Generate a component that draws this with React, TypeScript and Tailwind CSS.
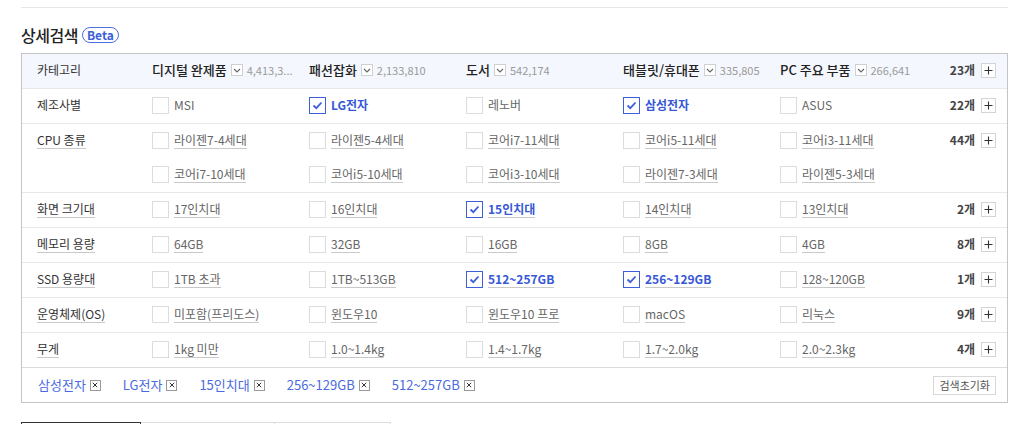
import { Fragment } from "react";

type Opt = { label: string; checked?: boolean; link?: boolean };
type Row = { title: string; count: string; link?: boolean; lines: Opt[][] };

const HEADER = [
  { name: "디지털 완제품", count: "4,413,3..." },
  { name: "패션잡화", count: "2,133,810" },
  { name: "도서", count: "542,174" },
  { name: "태블릿/휴대폰", count: "335,805" },
  { name: "PC 주요 부품", count: "266,641" },
];

const ROWS: Row[] = [
  {
    title: "제조사별",
    count: "22개",
    lines: [
      [
        { label: "MSI" },
        { label: "LG전자", checked: true },
        { label: "레노버" },
        { label: "삼성전자", checked: true },
        { label: "ASUS" },
      ],
    ],
  },
  {
    title: "CPU 종류",
    count: "44개",
    link: true,
    lines: [
      [
        { label: "라이젠7-4세대", link: true },
        { label: "라이젠5-4세대", link: true },
        { label: "코어i7-11세대", link: true },
        { label: "코어i5-11세대", link: true },
        { label: "코어i3-11세대", link: true },
      ],
      [
        { label: "코어i7-10세대", link: true },
        { label: "코어i5-10세대", link: true },
        { label: "코어i3-10세대", link: true },
        { label: "라이젠7-3세대", link: true },
        { label: "라이젠5-3세대", link: true },
      ],
    ],
  },
  {
    title: "화면 크기대",
    count: "2개",
    link: true,
    lines: [
      [
        { label: "17인치대", link: true },
        { label: "16인치대", link: true },
        { label: "15인치대", checked: true, link: true },
        { label: "14인치대", link: true },
        { label: "13인치대", link: true },
      ],
    ],
  },
  {
    title: "메모리 용량",
    count: "8개",
    link: true,
    lines: [
      [
        { label: "64GB", link: true },
        { label: "32GB", link: true },
        { label: "16GB", link: true },
        { label: "8GB", link: true },
        { label: "4GB", link: true },
      ],
    ],
  },
  {
    title: "SSD 용량대",
    count: "1개",
    link: true,
    lines: [
      [
        { label: "1TB 초과", link: true },
        { label: "1TB~513GB", link: true },
        { label: "512~257GB", checked: true, link: true },
        { label: "256~129GB", checked: true, link: true },
        { label: "128~120GB", link: true },
      ],
    ],
  },
  {
    title: "운영체제(OS)",
    count: "9개",
    link: true,
    lines: [
      [
        { label: "미포함(프리도스)", link: true },
        { label: "윈도우10", link: true },
        { label: "윈도우10 프로", link: true },
        { label: "macOS", link: true },
        { label: "리눅스", link: true },
      ],
    ],
  },
  {
    title: "무게",
    count: "4개",
    link: true,
    lines: [
      [
        { label: "1kg 미만", link: true },
        { label: "1.0~1.4kg", link: true },
        { label: "1.4~1.7kg", link: true },
        { label: "1.7~2.0kg", link: true },
        { label: "2.0~2.3kg", link: true },
      ],
    ],
  },
];

const TAGS = ["삼성전자", "LG전자", "15인치대", "256~129GB", "512~257GB"];

function Checkbox({ checked }: { checked?: boolean }) {
  return (
    <span
      className={`flex h-[17px] w-[17px] shrink-0 items-center justify-center border bg-white ${
        checked ? "border-[#3d5fdb]" : "border-[#dcdcdc]"
      }`}
    >
      {checked && (
        <svg width="11" height="9" viewBox="0 0 11 9" fill="none" aria-hidden="true">
          <path d="M1.5 4.5 4.3 7.2 9.5 1.5" stroke="#3d5fdb" strokeWidth="1.8" />
        </svg>
      )}
    </span>
  );
}

function PlusBox() {
  return (
    <span className="flex h-[15px] w-[15px] items-center justify-center border border-[#d4d4d4] bg-white">
      <svg width="9" height="9" viewBox="0 0 9 9" aria-hidden="true">
        <path d="M4.5 0.5v8M0.5 4.5h8" stroke="#333" strokeWidth="1.1" />
      </svg>
    </span>
  );
}

function Chevron() {
  return (
    <span className="flex h-[12px] w-[12px] items-center justify-center border border-[#d0d0d0] bg-white">
      <svg width="8" height="5" viewBox="0 0 8 5" fill="none" aria-hidden="true">
        <path d="M1 1l3 3 3-3" stroke="#666" strokeWidth="1.1" />
      </svg>
    </span>
  );
}

function Option({ opt }: { opt: Opt }) {
  return (
    <div className="flex w-[157px] items-center gap-[5px]">
      <Checkbox checked={opt.checked} />
      <span
        className={`whitespace-nowrap text-[12px] leading-[16px] ${
          opt.checked ? "font-bold text-[#3658d6]" : "text-[#666]"
        } ${opt.link ? "border-b border-[#c9c9c9]" : ""}`}
      >
        {opt.label}
      </span>
    </div>
  );
}

export default function App() {
  return (
    <div
      className="h-[424px] w-[1029px] overflow-hidden bg-white px-[21px] pt-[7px]"
      style={{ fontFamily: '"Noto Sans CJK KR", "Noto Sans", sans-serif' }}
    >
      <div className="border-t border-[#e6e6e6]" />

      {/* Title */}
      <div className="mt-[16px] flex h-[22px] items-center gap-[4px]">
        <h2 className="text-[16px] font-medium tracking-[-0.5px] text-[#222]">상세검색</h2>
        <span className="flex h-[16px] items-center rounded-full border border-[#4f6fe0] px-[4px] text-[12px] font-bold leading-none text-[#3d5fdb]">
          Beta
        </span>
      </div>

      {/* Filter table */}
      <div className="mt-[7px] border border-[#c4c4c4]">
        {/* Header */}
        <div className="flex h-[34px] items-center bg-[#f4f7fd] pb-[2px]">
          <div className="w-[130px] pl-[15px] text-[12px] text-[#333]">카테고리</div>
          {HEADER.map((h) => (
            <div key={h.name} className="flex w-[157px] items-center gap-[4px] whitespace-nowrap">
              <span className="text-[13px] font-medium text-[#222]">{h.name}</span>
              <Chevron />
              <span className="text-[11px] text-[#9a9a9a]">{h.count}</span>
            </div>
          ))}
          <div className="flex flex-1 items-center justify-end gap-[6px] pr-[11px]">
            <span className="text-[12px] font-bold text-[#444]">23개</span>
            <PlusBox />
          </div>
        </div>

        {ROWS.map((row) => (
          <div key={row.title} className="flex border-t border-[#e8e8e8]">
            <div className="w-[130px] pl-[15px]">
              <div className="flex h-[34px] items-center pb-[2px]">
                <span
                  className={`text-[12px] text-[#333] ${row.link ? "border-b border-[#c9c9c9] leading-[16px]" : ""}`}
                >
                  {row.title}
                </span>
              </div>
            </div>
            <div className="flex flex-col">
              {row.lines.map((line, i) => (
                <div key={i} className="flex h-[34px] items-center pb-[2px]">
                  {line.map((o) => (
                    <Option key={o.label} opt={o} />
                  ))}
                </div>
              ))}
            </div>
            <div className="flex h-[34px] flex-1 items-center justify-end gap-[6px] pb-[2px] pr-[11px]">
              <span className="text-[12px] font-bold text-[#444]">{row.count}</span>
              <PlusBox />
            </div>
          </div>
        ))}

        {/* Selected tags */}
        <div className="flex h-[35px] items-center border-t border-[#dcdcdc] pl-[16px] pr-[11px]">
          <div className="flex flex-1 items-center gap-[22px]">
            {TAGS.map((t) => (
              <Fragment key={t}>
                <span className="flex items-center gap-[4px] text-[13px] text-[#4a6ae0]">
                  {t}
                  <span className="flex h-[11px] w-[11px] items-center justify-center border border-[#999]">
                    <svg width="6" height="6" viewBox="0 0 6 6" aria-hidden="true">
                      <path d="M0.8 0.8l4.4 4.4M5.2 0.8L0.8 5.2" stroke="#333" strokeWidth="1" />
                    </svg>
                  </span>
                </span>
              </Fragment>
            ))}
          </div>
          <button
            type="button"
            className="h-[19px] border border-[#d8d8d8] bg-white px-[5px] text-[11px] leading-none text-[#555]"
          >
            검색초기화
          </button>
        </div>
      </div>

      {/* Tabs below */}
      <div className="mt-[19px] flex">
        <div className="h-[10px] w-[120px] border-x border-t border-[#333]" />
        <div className="h-[10px] w-[134px] border-r border-t border-[#ddd]" />
        <div className="h-[10px] w-[116px] border-r border-t border-[#ddd]" />
      </div>
    </div>
  );
}
